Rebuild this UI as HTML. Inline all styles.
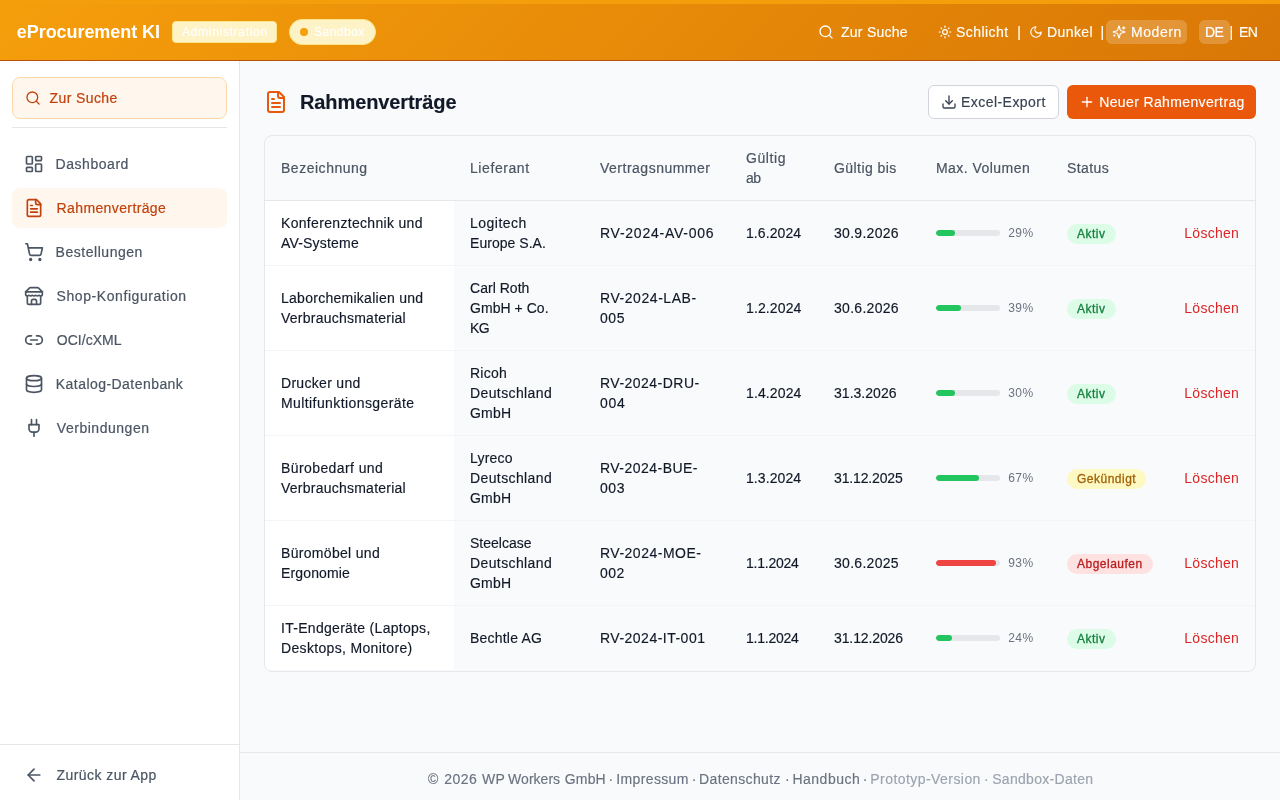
<!DOCTYPE html>
<html lang="de">
<head>
<meta charset="utf-8">
<title>Rahmenverträge</title>
<style>
*{box-sizing:border-box;margin:0;padding:0}
html,body{width:1280px;height:800px;overflow:hidden}
body{-webkit-font-smoothing:antialiased}
#root{position:absolute;left:0;top:0;width:1280px;height:800px;will-change:transform;background:#f9fafb;-webkit-text-stroke:0.15px currentColor}
body{font-family:"Liberation Sans",sans-serif;background:#f9fafb;color:#111827;font-size:14px;position:relative;letter-spacing:0.3px}
.abs{position:absolute}
svg.i{fill:none;stroke:currentColor;stroke-width:2;stroke-linecap:round;stroke-linejoin:round;display:block}
/* header */
#hdr{position:absolute;left:0;top:0;width:1280px;height:61px;background:linear-gradient(135deg,#f59e0b 0%,#d97706 100%);border-top:4px solid #f59e0b;border-bottom:1px solid #b45309}
#hdr .t{position:absolute;color:#fff;white-space:nowrap;line-height:20px}
/* sidebar */
#side{position:absolute;left:0;top:61px;width:240px;height:739px;background:#fff;border-right:1px solid #e5e7eb}
.nav{position:absolute;left:12px;width:215px;height:40px;border-radius:8px;color:#4b5563}
.nav svg{position:absolute;left:12px;top:10px}
.nav span{position:absolute;left:44px;top:10px;line-height:20px;white-space:nowrap;letter-spacing:0.45px;-webkit-text-stroke:0.2px currentColor}
.nav.act{background:#fff7ed;color:#c2410c}
/* main */
.btn{position:absolute;height:34px;border-radius:6px;white-space:nowrap}
table{border-collapse:collapse}
#tbl{position:absolute;left:264px;top:135px;width:992px;height:537px;border:1px solid #e5e7eb;border-radius:8px;overflow:hidden;background:#f9fafb}
.cell{position:absolute;line-height:20px;white-space:nowrap}
.th{color:#4b5563;-webkit-text-stroke:0.2px currentColor}
.td{color:#111827}
.hline{position:absolute;left:0;width:990px;height:1px;background:#e5e7eb}
.wcol{position:absolute;left:0;width:189px;background:#fff}
.bar{position:absolute;width:64px;height:6px;border-radius:3px;background:#e5e7eb;overflow:hidden}
.bar i{position:absolute;left:0;top:0;height:6px;border-radius:3px;background:#22c55e}
.pct{position:absolute;font-size:12px;color:#6b7280;line-height:16px;letter-spacing:0.4px;margin-left:0.3px;-webkit-text-stroke:0}
.badge{position:absolute;height:20px;border-radius:10px;font-size:12px;line-height:20px;padding:0 10px;white-space:nowrap;letter-spacing:0.5px;-webkit-text-stroke:0.3px currentColor}
.g{background:#dcfce7;color:#15803d}
.y{background:#fef9c3;color:#a16207}
.r{background:#fee2e2;color:#b91c1c}
#foot span{position:absolute;top:769px;line-height:20px;white-space:nowrap}
.del{position:absolute;color:#dc2626;line-height:20px;letter-spacing:0.25px;-webkit-text-stroke:0}
</style>
</head>
<body><div id="root">
<div id="hdr">
  <div class="t" style="left:16.8px;top:18px;font-size:18px;font-weight:bold;letter-spacing:-0.06px;-webkit-text-stroke:0">eProcurement KI</div>
  <div class="abs" style="left:172px;top:17px;width:105px;height:22px;border-radius:4px;background:#fef3c7;border:1px solid #fde68a;"></div>
  <div class="t" style="left:182px;top:18px;font-size:12px;letter-spacing:0.7px">Administration</div>
  <div class="abs" style="left:289px;top:15px;width:87px;height:26px;border-radius:13px;background:#fef3c7;border:1px solid #fde68a"></div>
  <div class="abs" style="left:300px;top:24px;width:8px;height:8px;border-radius:4px;background:#f59e0b"></div>
  <div class="t" style="left:314px;top:18px;font-size:12px;letter-spacing:0.5px">Sandbox</div>

  <svg class="i abs" style="left:818px;top:20px;color:#fff" width="16" height="16" viewBox="0 0 24 24"><circle cx="11" cy="11" r="8"/><path d="m21 21-4.3-4.3"/></svg>
  <div class="t" style="left:841px;top:18px;letter-spacing:0.25px">Zur Suche</div>

  <svg class="i abs" style="left:938px;top:21px;color:#fff" width="14" height="14" viewBox="0 0 24 24"><circle cx="12" cy="12" r="4"/><path d="M12 2v2"/><path d="M12 20v2"/><path d="m4.93 4.93 1.41 1.41"/><path d="m17.66 17.66 1.41 1.41"/><path d="M2 12h2"/><path d="M20 12h2"/><path d="m6.34 17.66-1.41 1.41"/><path d="m19.07 4.93-1.41 1.41"/></svg>
  <div class="t" style="left:956px;top:18px;letter-spacing:0.45px">Schlicht</div>
  <div class="t" style="left:1017.3px;top:18px">|</div>
  <svg class="i abs" style="left:1029px;top:21px;color:#fff" width="14" height="14" viewBox="0 0 24 24"><path d="M12 3a6 6 0 0 0 9 9 9 9 0 1 1-9-9Z"/></svg>
  <div class="t" style="left:1047px;top:18px;letter-spacing:0.4px">Dunkel</div>
  <div class="t" style="left:1100.6px;top:18px">|</div>
  <div class="abs" style="left:1106px;top:16px;width:81px;height:24px;border-radius:6px;background:rgba(255,255,255,0.2)"></div>
  <svg class="i abs" style="left:1112px;top:21px;color:#fff" width="14" height="14" viewBox="0 0 24 24"><path d="M9.937 15.5A2 2 0 0 0 8.5 14.063l-6.135-1.582a.5.5 0 0 1 0-.962L8.5 9.936A2 2 0 0 0 9.937 8.5l1.582-6.135a.5.5 0 0 1 .963 0L14.063 8.5A2 2 0 0 0 15.5 9.937l6.135 1.581a.5.5 0 0 1 0 .964L15.5 14.063a2 2 0 0 0-1.437 1.437l-1.582 6.135a.5.5 0 0 1-.963 0z"/><path d="M20 3v4"/><path d="M22 5h-4"/><path d="M4 17v2"/><path d="M5 18H3"/></svg>
  <div class="t" style="left:1131px;top:18px;letter-spacing:0.55px">Modern</div>
  <div class="abs" style="left:1199px;top:16px;width:31px;height:24px;border-radius:6px;background:rgba(255,255,255,0.2)"></div>
  <div class="t" style="left:1205px;top:18px;letter-spacing:-0.6px">DE</div>
  <div class="t" style="left:1229.6px;top:18px">|</div>
  <div class="t" style="left:1239px;top:18px;letter-spacing:-0.6px">EN</div>
</div>
<div id="side">
  <div class="abs" style="left:12px;top:16px;width:215px;height:42px;border:1px solid #fed7aa;background:#fff7ed;border-radius:8px"></div>
  <svg class="i abs" style="left:25px;top:29px;color:#c2410c" width="16" height="16" viewBox="0 0 24 24"><circle cx="11" cy="11" r="8"/><path d="m21 21-4.3-4.3"/></svg>
  <div class="abs" style="left:49.5px;top:27px;line-height:20px;color:#c2410c;letter-spacing:0.4px;-webkit-text-stroke:0.2px currentColor">Zur Suche</div>
  <div class="abs" style="left:12px;top:66px;width:215px;height:1px;background:#e5e7eb"></div>
  <div class="nav" style="top:83px"><svg class="i" width="20" height="20" viewBox="0 0 24 24"><rect width="7" height="9" x="3" y="3" rx="1"/><rect width="7" height="5" x="14" y="3" rx="1"/><rect width="7" height="9" x="14" y="12" rx="1"/><rect width="7" height="5" x="3" y="16" rx="1"/></svg><span style="letter-spacing:0.54px;left:43.6px">Dashboard</span></div>
  <div class="nav act" style="top:127px"><svg class="i" width="20" height="20" viewBox="0 0 24 24"><path d="M15 2H6a2 2 0 0 0-2 2v16a2 2 0 0 0 2 2h12a2 2 0 0 0 2-2V7Z"/><path d="M14 2v4a2 2 0 0 0 2 2h4"/><path d="M10 9H8"/><path d="M16 13H8"/><path d="M16 17H8"/></svg><span style="letter-spacing:0.38px;left:44.6px">Rahmenverträge</span></div>
  <div class="nav" style="top:171px"><svg class="i" width="20" height="20" viewBox="0 0 24 24"><circle cx="8" cy="21" r="1"/><circle cx="19" cy="21" r="1"/><path d="M2.05 2.05h2l2.66 12.42a2 2 0 0 0 2 1.58h9.78a2 2 0 0 0 1.95-1.57l1.65-7.43H5.12"/></svg><span style="letter-spacing:0.53px;left:43.6px">Bestellungen</span></div>
  <div class="nav" style="top:215px"><svg class="i" width="20" height="20" viewBox="0 0 24 24"><path d="m2 7 4.41-4.41A2 2 0 0 1 7.83 2h8.34a2 2 0 0 1 1.42.59L22 7"/><path d="M4 12v8a2 2 0 0 0 2 2h12a2 2 0 0 0 2-2v-8"/><path d="M15 22v-4a2 2 0 0 0-2-2h-2a2 2 0 0 0-2 2v4"/><path d="M2 7h20"/><path d="M22 7v3a2 2 0 0 1-2 2a2.7 2.7 0 0 1-1.59-.63.7.7 0 0 0-.82 0A2.7 2.7 0 0 1 16 12a2.7 2.7 0 0 1-1.59-.63.7.7 0 0 0-.82 0A2.7 2.7 0 0 1 12 12a2.7 2.7 0 0 1-1.59-.63.7.7 0 0 0-.82 0A2.7 2.7 0 0 1 8 12a2.7 2.7 0 0 1-1.59-.63.7.7 0 0 0-.82 0A2.7 2.7 0 0 1 4 12a2 2 0 0 1-2-2V7"/></svg><span style="letter-spacing:0.57px;left:44.6px">Shop-Konfiguration</span></div>
  <div class="nav" style="top:259px"><svg class="i" width="20" height="20" viewBox="0 0 24 24"><path d="M9 17H7A5 5 0 0 1 7 7h2"/><path d="M15 7h2a5 5 0 1 1 0 10h-2"/><line x1="8" x2="16" y1="12" y2="12"/></svg><span style="letter-spacing:0.02px;left:44.8px">OCI/cXML</span></div>
  <div class="nav" style="top:303px"><svg class="i" width="20" height="20" viewBox="0 0 24 24"><ellipse cx="12" cy="5" rx="9" ry="3"/><path d="M3 5V19A9 3 0 0 0 21 19V5"/><path d="M3 12A9 3 0 0 0 21 12"/></svg><span style="letter-spacing:0.45px;left:43.8px">Katalog-Datenbank</span></div>
  <div class="nav" style="top:347px"><svg class="i" width="20" height="20" viewBox="0 0 24 24"><path d="M12 22v-5"/><path d="M9 8V2"/><path d="M15 8V2"/><path d="M18 8v5a4 4 0 0 1-4 4h-4a4 4 0 0 1-4-4V8Z"/></svg><span style="letter-spacing:0.53px;left:44.8px">Verbindungen</span></div>
  <div class="abs" style="left:0;top:683px;width:239px;height:1px;background:#e5e7eb"></div>
  <svg class="i abs" style="left:24px;top:704px;color:#4b5563" width="20" height="20" viewBox="0 0 24 24"><path d="m12 19-7-7 7-7"/><path d="M19 12H5"/></svg>
  <div class="abs" style="left:56.5px;top:704px;line-height:20px;color:#4b5563;letter-spacing:0.44px;-webkit-text-stroke:0.2px currentColor">Zurück zur App</div>
</div>
<svg class="i abs" style="left:264px;top:90px;color:#ea580c" width="24" height="24" viewBox="0 0 24 24"><path d="M15 2H6a2 2 0 0 0-2 2v16a2 2 0 0 0 2 2h12a2 2 0 0 0 2-2V7Z"/><path d="M14 2v4a2 2 0 0 0 2 2h4"/><path d="M10 9H8"/><path d="M16 13H8"/><path d="M16 17H8"/></svg>
<div class="abs" style="left:300px;top:88px;font-size:20px;line-height:28px;font-weight:bold;color:#111827;letter-spacing:-0.1px;white-space:nowrap">Rahmenverträge</div>
<div class="btn" style="left:928px;top:85px;width:131px;background:#fff;border:1px solid #d1d5db"></div>
<svg class="i abs" style="left:941px;top:94px;color:#374151" width="16" height="16" viewBox="0 0 24 24"><path d="M21 15v4a2 2 0 0 1-2 2H5a2 2 0 0 1-2-2v-4"/><polyline points="7 10 12 15 17 10"/><line x1="12" x2="12" y1="15" y2="3"/></svg>
<div class="abs" style="left:961px;top:92px;line-height:20px;color:#374151;letter-spacing:0.45px;white-space:nowrap">Excel-Export</div>
<div class="btn" style="left:1067px;top:85px;width:189px;background:#ea580c"></div>
<svg class="i abs" style="left:1079px;top:94px;color:#fff" width="16" height="16" viewBox="0 0 24 24"><path d="M5 12h14"/><path d="M12 5v14"/></svg>
<div class="abs" style="left:1099.2px;top:92px;line-height:20px;color:#fff;letter-spacing:0.37px;white-space:nowrap">Neuer Rahmenvertrag</div>
<div id="tbl">
  <div class="cell th" style="left:16px;top:22px"><span style="letter-spacing:0.52px">Bezeichnung</span></div>
  <div class="cell th" style="left:205px;top:22px"><span style="letter-spacing:0.58px">Lieferant</span></div>
  <div class="cell th" style="left:335px;top:22px"><span style="letter-spacing:0.5px">Vertragsnummer</span></div>
  <div class="cell th" style="left:481px;top:12px"><span style="letter-spacing:0.58px">Gültig</span><br><span style="letter-spacing:-0.59px">ab</span></div>
  <div class="cell th" style="left:569px;top:22px"><span style="letter-spacing:0.43px">Gültig bis</span></div>
  <div class="cell th" style="left:671px;top:22px"><span style="letter-spacing:0.46px">Max. Volumen</span></div>
  <div class="cell th" style="left:802px;top:22px"><span style="letter-spacing:0.4px">Status</span></div>
  <div class="hline" style="top:64px"></div>
  <div class="wcol" style="top:65px;height:64px"></div>
  <div class="cell td" style="left:16px;top:77px"><span style="letter-spacing:0.32px">Konferenztechnik und</span><br><span style="letter-spacing:0.19px">AV-Systeme</span></div>
  <div class="cell td" style="left:205px;top:77px"><span style="letter-spacing:0.49px">Logitech</span><br><span style="letter-spacing:0.04px">Europe S.A.</span></div>
  <div class="cell td" style="left:335px;top:87px"><span style="letter-spacing:0.75px">RV-2024-AV-006</span></div>
  <div class="cell td" style="left:481px;top:87px"><span style="letter-spacing:0.08px">1.6.2024</span></div>
  <div class="cell td" style="left:569px;top:87px"><span style="letter-spacing:0.29px">30.9.2026</span></div>
  <div class="bar" style="left:671px;top:94px"><i style="width:18.6px;background:#22c55e"></i></div>
  <div class="pct" style="left:743px;top:89px">29%</div>
  <div class="badge g" style="left:802px;top:88px">Aktiv</div>
  <div class="del" style="right:16px;top:87px">Löschen</div>
  <div class="hline" style="top:129px;background:#f3f4f6"></div>
  <div class="wcol" style="top:130px;height:84px"></div>
  <div class="cell td" style="left:16px;top:152px"><span style="letter-spacing:0.27px">Laborchemikalien und</span><br><span style="letter-spacing:0.24px">Verbrauchsmaterial</span></div>
  <div class="cell td" style="left:205px;top:142px"><span style="letter-spacing:0.03px">Carl Roth</span><br><span style="letter-spacing:0.04px">GmbH + Co.</span><br><span style="letter-spacing:-0.54px">KG</span></div>
  <div class="cell td" style="left:335px;top:152px"><span style="letter-spacing:0.56px">RV-2024-LAB-</span><br><span style="letter-spacing:0.56px">005</span></div>
  <div class="cell td" style="left:481px;top:162px"><span style="letter-spacing:0.13px">1.2.2024</span></div>
  <div class="cell td" style="left:569px;top:162px"><span style="letter-spacing:0.29px">30.6.2026</span></div>
  <div class="bar" style="left:671px;top:169px"><i style="width:25.0px;background:#22c55e"></i></div>
  <div class="pct" style="left:743px;top:164px">39%</div>
  <div class="badge g" style="left:802px;top:163px">Aktiv</div>
  <div class="del" style="right:16px;top:162px">Löschen</div>
  <div class="hline" style="top:214px;background:#f3f4f6"></div>
  <div class="wcol" style="top:215px;height:84px"></div>
  <div class="cell td" style="left:16px;top:237px"><span style="letter-spacing:0.3px">Drucker und</span><br><span style="letter-spacing:0.41px">Multifunktionsgeräte</span></div>
  <div class="cell td" style="left:205px;top:227px"><span style="letter-spacing:0.22px">Ricoh</span><br><span style="letter-spacing:0.39px">Deutschland</span><br><span style="letter-spacing:0.22px">GmbH</span></div>
  <div class="cell td" style="left:335px;top:237px"><span style="letter-spacing:0.48px">RV-2024-DRU-</span><br><span style="letter-spacing:0.66px">004</span></div>
  <div class="cell td" style="left:481px;top:247px"><span style="letter-spacing:0.13px">1.4.2024</span></div>
  <div class="cell td" style="left:569px;top:247px"><span style="letter-spacing:0.03px">31.3.2026</span></div>
  <div class="bar" style="left:671px;top:254px"><i style="width:19.2px;background:#22c55e"></i></div>
  <div class="pct" style="left:743px;top:249px">30%</div>
  <div class="badge g" style="left:802px;top:248px">Aktiv</div>
  <div class="del" style="right:16px;top:247px">Löschen</div>
  <div class="hline" style="top:299px;background:#f3f4f6"></div>
  <div class="wcol" style="top:300px;height:84px"></div>
  <div class="cell td" style="left:16px;top:322px"><span style="letter-spacing:0.41px">Bürobedarf und</span><br><span style="letter-spacing:0.24px">Verbrauchsmaterial</span></div>
  <div class="cell td" style="left:205px;top:312px"><span style="letter-spacing:0.22px">Lyreco</span><br><span style="letter-spacing:0.39px">Deutschland</span><br><span style="letter-spacing:0.22px">GmbH</span></div>
  <div class="cell td" style="left:335px;top:322px"><span style="letter-spacing:0.47px">RV-2024-BUE-</span><br><span style="letter-spacing:0.56px">003</span></div>
  <div class="cell td" style="left:481px;top:332px"><span style="letter-spacing:0.08px">1.3.2024</span></div>
  <div class="cell td" style="left:569px;top:332px"><span style="letter-spacing:-0.15px">31.12.2025</span></div>
  <div class="bar" style="left:671px;top:339px"><i style="width:42.9px;background:#22c55e"></i></div>
  <div class="pct" style="left:743px;top:334px">67%</div>
  <div class="badge y" style="left:802px;top:333px">Gekündigt</div>
  <div class="del" style="right:16px;top:332px">Löschen</div>
  <div class="hline" style="top:384px;background:#f3f4f6"></div>
  <div class="wcol" style="top:385px;height:84px"></div>
  <div class="cell td" style="left:16px;top:407px"><span style="letter-spacing:0.31px">Büromöbel und</span><br><span style="letter-spacing:0.15px">Ergonomie</span></div>
  <div class="cell td" style="left:205px;top:397px"><span style="letter-spacing:0.01px">Steelcase</span><br><span style="letter-spacing:0.39px">Deutschland</span><br><span style="letter-spacing:0.22px">GmbH</span></div>
  <div class="cell td" style="left:335px;top:407px"><span style="letter-spacing:0.5px">RV-2024-MOE-</span><br><span style="letter-spacing:0.41px">002</span></div>
  <div class="cell td" style="left:481px;top:417px"><span style="letter-spacing:-0.24px">1.1.2024</span></div>
  <div class="cell td" style="left:569px;top:417px"><span style="letter-spacing:0.29px">30.6.2025</span></div>
  <div class="bar" style="left:671px;top:424px"><i style="width:59.5px;background:#ef4444"></i></div>
  <div class="pct" style="left:743px;top:419px">93%</div>
  <div class="badge r" style="left:802px;top:418px">Abgelaufen</div>
  <div class="del" style="right:16px;top:417px">Löschen</div>
  <div class="hline" style="top:469px;background:#f3f4f6"></div>
  <div class="wcol" style="top:470px;height:64px"></div>
  <div class="cell td" style="left:16px;top:482px"><span style="letter-spacing:0.29px">IT-Endgeräte (Laptops,</span><br><span style="letter-spacing:0.33px">Desktops, Monitore)</span></div>
  <div class="cell td" style="left:205px;top:492px"><span style="letter-spacing:0.21px">Bechtle AG</span></div>
  <div class="cell td" style="left:335px;top:492px"><span style="letter-spacing:0.49px">RV-2024-IT-001</span></div>
  <div class="cell td" style="left:481px;top:492px"><span style="letter-spacing:-0.24px">1.1.2024</span></div>
  <div class="cell td" style="left:569px;top:492px"><span style="letter-spacing:-0.11px">31.12.2026</span></div>
  <div class="bar" style="left:671px;top:499px"><i style="width:16px;background:#22c55e"></i></div>
  <div class="pct" style="left:743px;top:494px">24%</div>
  <div class="badge g" style="left:802px;top:493px">Aktiv</div>
  <div class="del" style="right:16px;top:492px">Löschen</div>
</div>
<div class="abs" style="left:240px;top:752px;width:1040px;height:1px;background:#e5e7eb"></div>
<div id="foot"><span style="left:428.0px;letter-spacing:0.40px;color:#6b7280">©</span><span style="left:444.3px;letter-spacing:0.45px;color:#6b7280">2026</span><span style="left:482.1px;letter-spacing:0.09px;color:#6b7280">WP</span><span style="left:508.1px;letter-spacing:0.02px;color:#6b7280">Workers</span><span style="left:564.8px;letter-spacing:0.15px;color:#6b7280">GmbH</span><span style="left:608.5px;letter-spacing:0.00px;color:#6b7280">·</span><span style="left:616.3px;letter-spacing:0.36px;color:#6b7280">Impressum</span><span style="left:691.8px;letter-spacing:0.00px;color:#6b7280">·</span><span style="left:699.1px;letter-spacing:0.35px;color:#6b7280">Datenschutz</span><span style="left:784.9px;letter-spacing:0.00px;color:#6b7280">·</span><span style="left:792.4px;letter-spacing:0.51px;color:#6b7280">Handbuch</span><span style="left:862.8px;letter-spacing:0.00px;color:#6b7280">·</span><span style="left:870.3px;letter-spacing:0.44px;color:#9ca3af">Prototyp-Version</span><span style="left:984.1px;letter-spacing:0.00px;color:#9ca3af">·</span><span style="left:992.2px;letter-spacing:0.30px;color:#9ca3af">Sandbox-Daten</span></div>
</div></body>
</html>
